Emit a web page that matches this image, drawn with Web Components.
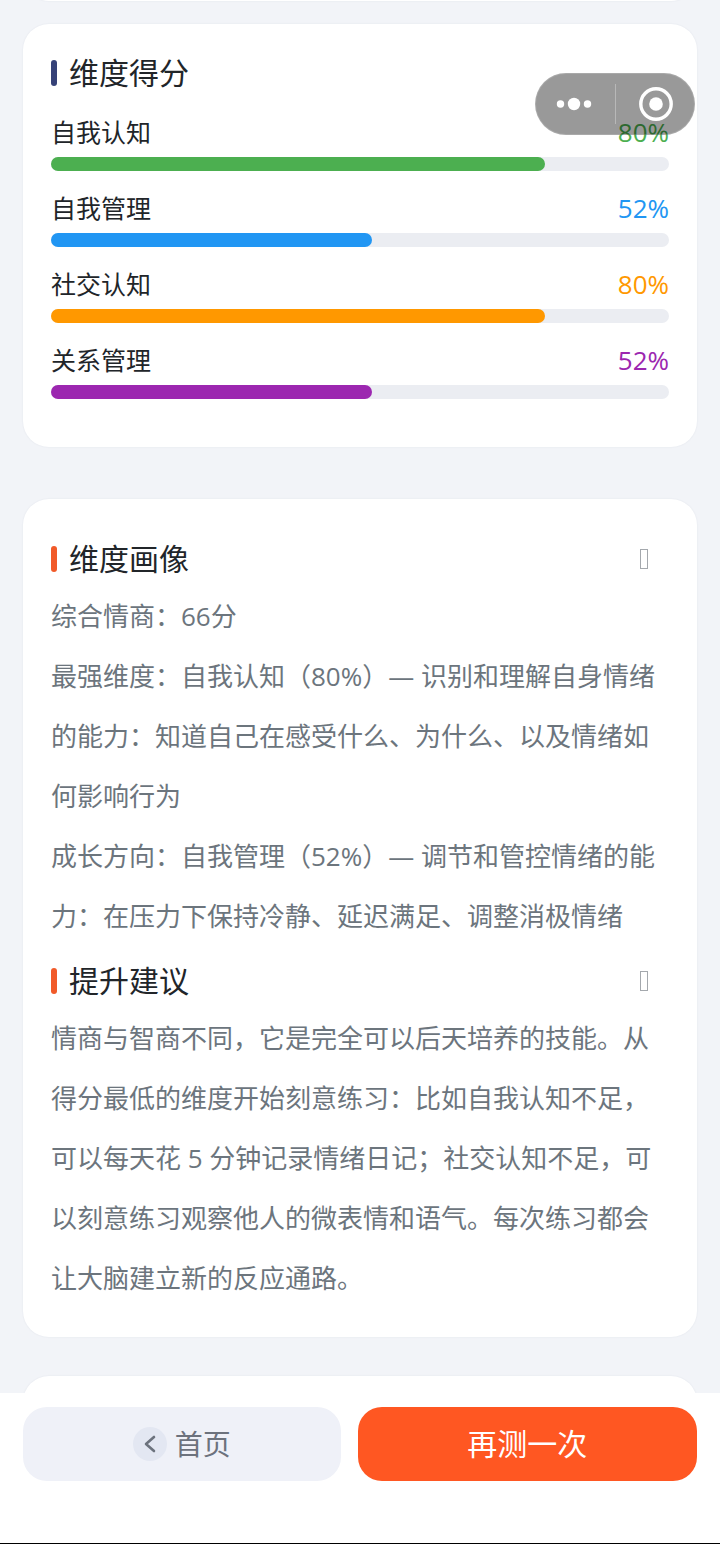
<!DOCTYPE html>
<html lang="zh-CN">
<head>
<meta charset="utf-8">
<meta name="viewport" content="width=device-width, initial-scale=1">
<title>情商测试结果</title>
<style>
    body {
        margin: 0;
        background: #f2f4f8;
        color: #212529;
        font-family: "Open Sans", "Noto Sans CJK SC", sans-serif;
    }
</style>
</head>
<body>

<result-page>
    <result-card class="previous"></result-card>

    <result-card class="scores">
        <section-title color="#364278">维度得分</section-title>
        <score-list>
            <score-bar label="自我认知" value="80" color="#4caf50"></score-bar>
            <score-bar label="自我管理" value="52" color="#2196f3"></score-bar>
            <score-bar label="社交认知" value="80" color="#ff9800"></score-bar>
            <score-bar label="关系管理" value="52" color="#9c27b0"></score-bar>
        </score-list>
    </result-card>

    <result-card class="report">
        <report-section heading="维度画像">
            <p>综合情商：66分</p>
            <p>最强维度：自我认知（80%）— 识别和理解自身情绪的能力：知道自己在感受什么、为什么、以及情绪如何影响行为</p>
            <p>成长方向：自我管理（52%）— 调节和管控情绪的能力：在压力下保持冷静、延迟满足、调整消极情绪</p>
        </report-section>
        <report-section heading="提升建议">
            <p>情商与智商不同，它是完全可以后天培养的技能。从得分最低的维度开始刻意练习：比如自我认知不足，可以每天花 5 分钟记录情绪日记；社交认知不足，可以刻意练习观察他人的微表情和语气。每次练习都会让大脑建立新的反应通路。</p>
        </report-section>
    </result-card>

    <result-card class="next"></result-card>

    <action-bar slot="footer"></action-bar>
    <mini-capsule slot="overlay"></mini-capsule>
</result-page>

<script>
(function() {
    "use strict";

    function createTemplate(html){
        var template = document.createElement("template");
        template.innerHTML = html;
        return template;
    }

    class BaseElement extends HTMLElement {
        constructor(){
            super();

            this._shadow = this.attachShadow({mode: "open"});
            this._shadow.appendChild(this.constructor.template.content.cloneNode(true));
        }
    }


    class ResultPage extends BaseElement {
        static template = createTemplate(`
            <style>
                :host {
                    display: flex;
                    flex-direction: column;
                    height: 100vh;
                }

                main {
                    flex: 1;
                    min-height: 0;
                    overflow: hidden;
                    display: flex;
                    flex-direction: column;
                    padding: 0 23px;
                }

                ::slotted(result-card) {
                    flex: none;
                }

                /* the cards above and below are scrolled mostly out of view */
                ::slotted(.previous) {
                    height: 60px;
                    margin: -59px 0 23px;
                }

                ::slotted(.scores) {
                    padding: 28px 28px 48px;
                    margin-bottom: 52px;
                }

                ::slotted(.report) {
                    padding: 39px 28px 29px;
                    margin-bottom: 39px;
                }

                ::slotted(.next) {
                    height: 60px;
                }
            </style>

            <main><slot></slot></main>
            <slot name="footer"></slot>
            <slot name="overlay"></slot>
        `);
    }


    class ResultCard extends BaseElement {
        static template = createTemplate(`
            <style>
                :host {
                    display: flex;
                    flex-direction: column;
                    gap: 14px;
                    box-sizing: border-box;
                    background: white;
                    border-radius: 26px;
                    box-shadow: 0 0 2px rgba(40, 50, 90, 0.08);
                }
            </style>

            <slot></slot>
        `);
    }


    class SectionTitle extends BaseElement {
        static template = createTemplate(`
            <style>
                :host {
                    display: flex;
                    align-items: center;
                    gap: 12px;
                }

                i {
                    width: 6px;
                    height: 26px;
                    border-radius: 3px;
                    background: var(--accent, #f15a29);
                }

                h2 {
                    margin: 0;
                    font-size: 30px;
                    font-weight: 400;
                    line-height: 42px;
                }
            </style>

            <i></i>
            <h2><slot></slot></h2>
        `);

        connectedCallback() {
            if(this.hasAttribute("color")){
                this.style.setProperty("--accent", this.getAttribute("color"));
            }
        }
    }


    class ScoreList extends BaseElement {
        static template = createTemplate(`
            <style>
                :host {
                    display: flex;
                    flex-direction: column;
                    gap: 19px;
                    padding-top: 6px;
                }
            </style>

            <slot></slot>
        `);
    }


    class ScoreBar extends BaseElement {
        static template = createTemplate(`
            <style>
                :host {
                    display: flex;
                    flex-direction: column;
                    gap: 7px;
                }

                .row {
                    display: flex;
                    align-items: center;
                    justify-content: space-between;
                    line-height: 36px;
                }

                .label {
                    font-size: 25px;
                }

                .value {
                    font-size: 26px;
                    color: var(--bar);
                }

                .track {
                    height: 14px;
                    border-radius: 7px;
                    background: #ebedf2;
                }

                .fill {
                    height: 100%;
                    border-radius: inherit;
                    background: var(--bar);
                }
            </style>

            <div class="row">
                <span class="label" id="label"></span>
                <span class="value"></span>
            </div>
            <div class="track" role="meter" aria-labelledby="label" aria-valuemin="0" aria-valuemax="100">
                <div class="fill"></div>
            </div>
        `);

        connectedCallback() {
            var value = this.getAttribute("value");

            this.style.setProperty("--bar", this.getAttribute("color"));
            this._shadow.querySelector(".label").textContent = this.getAttribute("label");
            this._shadow.querySelector(".value").textContent = `${ value }%`;
            this._shadow.querySelector(".track").setAttribute("aria-valuenow", value);
            this._shadow.querySelector(".fill").style.width = `${ value }%`;
        }
    }


    class ReportSection extends BaseElement {
        static template = createTemplate(`
            <style>
                :host {
                    display: flex;
                    flex-direction: column;
                    gap: 6px;
                }

                header {
                    display: flex;
                    align-items: center;
                    justify-content: space-between;
                }

                button {
                    display: flex;
                    padding: 8px 20px;
                    border: none;
                    background: none;
                    color: #a4a8ad;
                    cursor: pointer;
                }

                .body {
                    font-size: 26px;
                    line-height: 60px;
                    color: #6c757d;
                }

                ::slotted(p) {
                    margin: 0;
                }
            </style>

            <header>
                <section-title></section-title>
                <button type="button" aria-label="收起" aria-expanded="true">
                    <svg width="9" height="20" viewBox="0 0 9 20" fill="none" stroke="currentColor">
                        <rect x="0.5" y="0.5" width="7" height="19"/>
                    </svg>
                </button>
            </header>
            <div class="body"><slot></slot></div>
        `);

        connectedCallback() {
            this._shadow.querySelector("section-title").textContent = this.getAttribute("heading");
            this._shadow.querySelector("button").addEventListener("click", this.handleToggle);
        }

        disconnectedCallback() {
            this._shadow.querySelector("button").removeEventListener("click", this.handleToggle);
        }

        handleToggle = (evt) => {
            var body = this._shadow.querySelector(".body");

            body.hidden = !body.hidden;
            evt.currentTarget.setAttribute("aria-expanded", String(!body.hidden));
        };
    }


    class ActionBar extends BaseElement {
        static template = createTemplate(`
            <style>
                :host {
                    display: flex;
                    gap: 17px;
                    padding: 14px 23px 62px;
                    background: white;
                    border-bottom: 1px solid black;
                }

                button {
                    flex: 1 1 auto;
                    display: flex;
                    align-items: center;
                    justify-content: center;
                    gap: 8px;
                    height: 74px;
                    padding: 0;
                    border: none;
                    border-radius: 24px;
                    font: inherit;
                    line-height: 40px;
                    cursor: pointer;
                }

                .home {
                    background: #eff1f8;
                    color: #6c727d;
                    font-size: 28px;
                }

                .again {
                    background: #ff5722;
                    color: white;
                    font-size: 30px;
                }
            </style>

            <button type="button" class="home">
                <svg width="34" height="34" viewBox="0 0 34 34" fill="none">
                    <circle cx="17" cy="17" r="17" fill="#e3e7f2"/>
                    <path d="M21 10 L13 17 L21 24" stroke="#6c727d" stroke-width="2.6" stroke-linecap="round" stroke-linejoin="round"/>
                </svg>
                <span>首页</span>
            </button>
            <button type="button" class="again">再测一次</button>
        `);
    }


    class MiniCapsule extends BaseElement {
        static template = createTemplate(`
            <style>
                :host {
                    position: fixed;
                    top: 73px;
                    right: 25px;
                    display: flex;
                    align-items: center;
                    box-sizing: border-box;
                    width: 160px;
                    height: 62px;
                    border: 1px solid rgba(255, 255, 255, 0.15);
                    border-radius: 31px;
                    background: rgba(0, 0, 0, 0.4);
                }

                button {
                    flex: 1;
                    display: flex;
                    justify-content: center;
                    padding: 0 2px 0 0;
                    border: none;
                    background: none;
                    color: white;
                    cursor: pointer;
                }

                i + button {
                    padding: 0 0 0 2px;
                }

                i {
                    width: 1px;
                    height: 40px;
                    background: rgba(255, 255, 255, 0.3);
                }
            </style>

            <button type="button" aria-label="更多">
                <svg width="36" height="36" viewBox="0 0 36 36" fill="currentColor">
                    <circle cx="4.5" cy="18" r="3.7"/>
                    <circle cx="18" cy="18" r="6.2"/>
                    <circle cx="31.5" cy="18" r="3.7"/>
                </svg>
            </button>
            <i></i>
            <button type="button" aria-label="关闭">
                <svg width="36" height="36" viewBox="0 0 36 36">
                    <circle cx="18" cy="18" r="15.2" fill="none" stroke="currentColor" stroke-width="3.4"/>
                    <circle cx="18" cy="18" r="6.8" fill="currentColor"/>
                </svg>
            </button>
        `);
    }

    customElements.define("result-page", ResultPage);
    customElements.define("result-card", ResultCard);
    customElements.define("section-title", SectionTitle);
    customElements.define("score-list", ScoreList);
    customElements.define("score-bar", ScoreBar);
    customElements.define("report-section", ReportSection);
    customElements.define("action-bar", ActionBar);
    customElements.define("mini-capsule", MiniCapsule);

}) ();
</script>
</body>
</html>
